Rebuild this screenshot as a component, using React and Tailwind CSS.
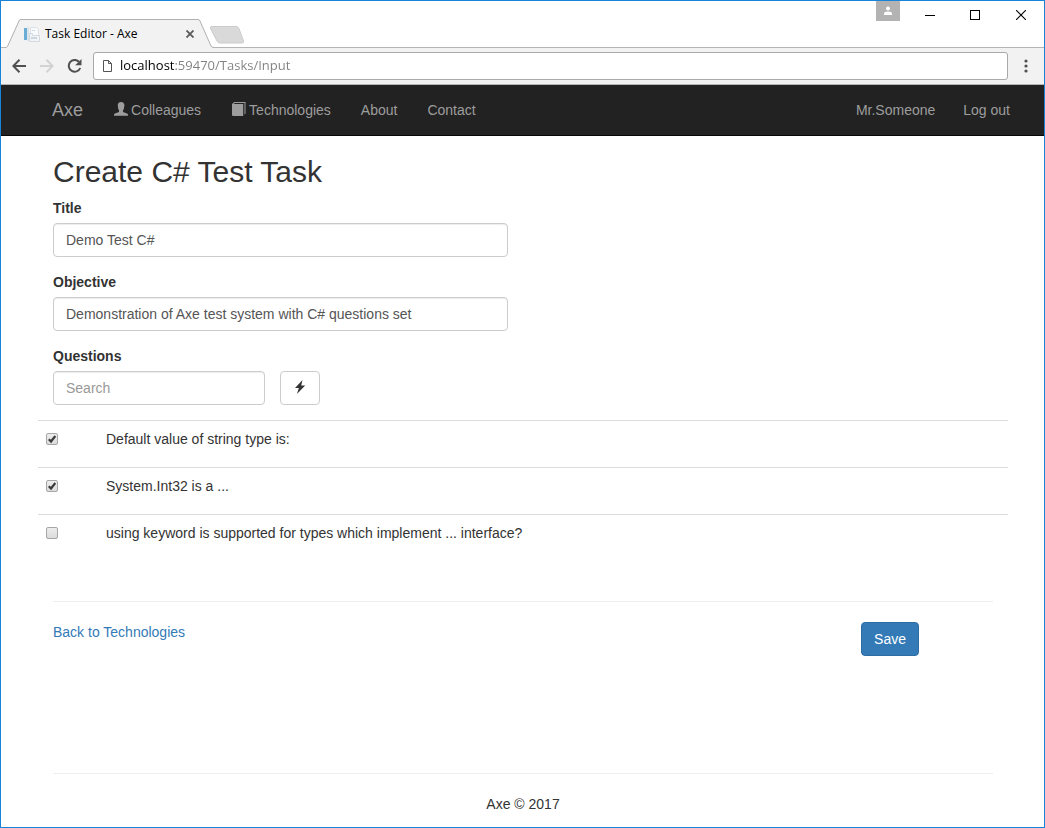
import React, { useState } from "react";

const QUESTIONS = [
  { id: "q1", text: "Default value of string type is:", checked: true },
  { id: "q2", text: "System.Int32 is a ...", checked: true },
  {
    id: "q3",
    text: "using keyword is supported for types which implement ... interface?",
    checked: false,
  },
];

const FIELD =
  "h-[34px] w-full rounded border border-[#ccc] bg-white px-3 text-sm text-[#555] shadow-[inset_0_1px_1px_rgba(0,0,0,0.075)] outline-none placeholder:text-[#999] focus:border-[#66afe9]";

function Favicon() {
  return (
    <svg width="16" height="16" viewBox="0 0 16 16" aria-hidden="true">
      <rect x="0" y="2" width="3" height="12" fill="#6aaed6" />
      <rect x="3" y="1" width="2" height="14" fill="#dbe4ec" />
      <path d="M6.500 1.500h6l2 2v7h-8z" fill="#f8fafc" stroke="#dce1e6" />
      <rect x="8" y="4" width="3" height="1" fill="#cfd9e2" />
      <path d="M5.500 7.500h3v2h7v6h-10z" fill="#f1f3f6" stroke="#d3d9df" />
      <rect x="7" y="11" width="6" height="2" fill="#cbd6e0" />
    </svg>
  );
}

function TabStrip() {
  return (
    <header className="flex h-[47px] justify-between border-b border-[#b5b5b5] bg-white">
      <div className="flex items-end">
        <div className="relative -mb-px ml-1 flex h-[29px] w-[209px] items-center">
          <svg className="absolute inset-0" width="209" height="29" viewBox="0 0 209 29" aria-hidden="true">
            <path d="M0 29V28.500Q1.800 28.500 2.500 27.500L14 2Q14.500 .5 16 .5H193Q194.500 .5 195 2L206 27Q207 28.500 209 28.500V29Z" fill="#f2f2f2" />
            <path d="M0 28.500Q1.800 28.500 2.500 27.500L14 2Q14.500 .5 16 .5H193Q194.500 .5 195 2L206 27Q207 28.500 209 28.500" fill="none" stroke="#b0b0b0" />
          </svg>
          <div className="relative flex w-full items-center gap-[5px] pr-4 pl-[19px]">
            <Favicon />
            <span className="flex-1 text-xs text-black">Task Editor - Axe</span>
            <button type="button" aria-label="Close tab" className="p-1">
              <svg width="8" height="8" viewBox="0 0 8 8" aria-hidden="true">
                <path d="M.5.5l7 7m0-7l-7 7" stroke="#5a5a5a" strokeWidth="1.800" />
              </svg>
            </button>
          </div>
        </div>
        <button type="button" aria-label="New tab" className="mb-[3px] -ml-[5px]">
          <svg width="35" height="18" viewBox="0 0 35 18" aria-hidden="true">
            <path d="M3 .5h24q2 0 3 2l4.500 12.500q.6 2-1.500 2H11q-2 0-3-2L1.500 2.500Q1 .5 3 .5z" fill="#d9d9d9" stroke="#cbcbcb" />
          </svg>
        </button>
      </div>
      <div className="flex items-start">
        <button type="button" aria-label="Profile" className="mr-6 flex h-5 w-6 items-center justify-center bg-[#b3b3b3]">
          <svg width="10" height="10" viewBox="0 0 10 10" fill="white" aria-hidden="true">
            <circle cx="5" cy="2.500" r="2" />
            <path d="M1 9V7.500Q1 5.500 5 5.500T9 7.500V9z" />
          </svg>
        </button>
        <button type="button" aria-label="Minimize" className="mt-2 mr-[34px]">
          <svg className="my-px block" width="12" height="10" viewBox="0 0 12 10" aria-hidden="true">
            <path d="M1 5.500h10" stroke="#000" />
          </svg>
        </button>
        <button type="button" aria-label="Maximize" className="mt-2 mr-9">
          <svg className="my-px block" width="10" height="10" viewBox="0 0 10 10" aria-hidden="true">
            <rect x=".5" y=".5" width="9" height="9" fill="none" stroke="#000" />
          </svg>
        </button>
        <button type="button" aria-label="Close window" className="mt-2 mr-[18px]">
          <svg className="my-px block" width="10" height="10" viewBox="0 0 10 10" aria-hidden="true">
            <path d="M0 0l10 10M10 0L0 10" stroke="#000" strokeWidth="1.100" />
          </svg>
        </button>
      </div>
    </header>
  );
}

function Toolbar() {
  return (
    <div className="flex h-[37px] items-center border-b border-[#b5b5b5] bg-[#f2f2f2] pr-4 pl-[11px]">
      <button type="button" aria-label="Back">
        <svg width="14" height="14" viewBox="0 0 14 14" fill="none" stroke="#505050" strokeWidth="2" aria-hidden="true">
          <path d="M14 7H1.500M7.500 .8L1.300 7l6.200 6.200" />
        </svg>
      </button>
      <button type="button" aria-label="Forward" className="ml-[14px]" disabled>
        <svg width="14" height="14" viewBox="0 0 14 14" fill="none" stroke="#d2d2d2" strokeWidth="2" aria-hidden="true">
          <path d="M0 7h12.500M6.500 .8L12.700 7l-6.200 6.200" />
        </svg>
      </button>
      <button type="button" aria-label="Reload" className="ml-[13px]">
        <svg width="15" height="14" viewBox="0 0 15 14" aria-hidden="true">
          <path d="M12 2.800A5.900 5.900 0 1 0 13.200 9" fill="none" stroke="#505050" strokeWidth="2" />
          <path d="M14.500 0v6.300H8.200z" fill="#505050" />
        </svg>
      </button>
      <label className="ml-[11px] flex h-7 flex-1 items-center gap-2 rounded-[3px] border border-[#a9a9a9] bg-white pl-[9px]">
        <svg width="9" height="12" viewBox="0 0 9 12" fill="none" stroke="#555" aria-hidden="true">
          <path d="M.5.5h5l3 3v8h-8z M5.500.5v3h3" />
        </svg>
        {/* The host part of the address is black, the rest grey. */}
        <input
          type="text"
          aria-label="Address"
          defaultValue="localhost:59470/Tasks/Input"
          className="min-w-0 flex-1 bg-[linear-gradient(to_right,#000_55px,#808080_55px)] bg-clip-text text-[13px] text-transparent caret-black outline-none"
        />
      </label>
      <button type="button" aria-label="Menu" className="ml-4">
        <svg width="4" height="14" viewBox="0 0 4 14" fill="#505050" aria-hidden="true">
          <circle cx="2" cy="2" r="1.600" />
          <circle cx="2" cy="7" r="1.600" />
          <circle cx="2" cy="12" r="1.600" />
        </svg>
      </button>
    </div>
  );
}

function UserIcon() {
  return (
    <svg width="15" height="14" viewBox="-1 0 15 14" fill="currentColor" aria-hidden="true">
      <path d="M7 0C4.700 0 3.800 1.400 3.800 3.200c0 1.900.4 3.500 1.400 4.600v1.400c0 .5-.3.800-.8 1L1 11.500C.2 11.900 0 12.300 0 13v.7h14V13c0-.7-.2-1.100-1-1.500l-3.400-1.300c-.5-.2-.8-.5-.8-1V7.800c1-1.100 1.600-2.700 1.600-4.600C10.400 1.400 9.300 0 7 0z" />
      <path d="M4.200 2h5.800v4l-1 2.500v1.500h-4v-1.500l-.8-2.500z" />
    </svg>
  );
}

function BookIcon() {
  return (
    <svg width="15" height="14" viewBox="-1 0 15 14" fill="currentColor" aria-hidden="true">
      <path d="M2.300 0H13.500V11.500L12.500 12.700V1H2.800L1.800 2H11.200V14H1.200Q0 14 0 13V2Z" />
    </svg>
  );
}

function Navbar() {
  return (
    <nav className="flex h-[51px] items-center justify-between border-b border-[#080808] bg-[#222] pr-[34px] pl-[51px] text-sm text-[#9d9d9d]">
      <div className="flex items-center">
        <a href="#home" className="mr-[30px] text-lg">Axe</a>
        <div className="flex items-center gap-[30px]">
          <a href="#colleagues" className="flex items-center gap-[3px]">
            <span className="pb-[2px]"><UserIcon /></span>
            Colleagues
          </a>
          <a href="#technologies" className="flex items-center gap-[3px]">
            <span className="pb-[2px]"><BookIcon /></span>
            Technologies
          </a>
          <a href="#about">About</a>
          <a href="#contact">Contact</a>
        </div>
      </div>
      <div className="flex items-center gap-7">
        <a href="#profile">Mr.Someone</a>
        <a href="#logout">Log out</a>
      </div>
    </nav>
  );
}

function QuestionRow({ question, onToggle }) {
  return (
    <tr className="h-[47px] border-t border-[#ddd] align-top">
      <td className="w-[60px] pt-3 pl-2">
        <span className="relative block h-3 w-3">
          <input
            type="checkbox"
            id={question.id}
            checked={question.checked}
            onChange={onToggle}
            className="block h-3 w-3 appearance-none rounded-xs border border-[#a6a6a6] bg-linear-to-b from-[#ededed] to-[#dcdcdc]"
          />
          {question.checked && (
            <svg className="pointer-events-none absolute inset-0" width="12" height="12" viewBox="0 0 12 12" aria-hidden="true">
              <path d="M2.800 6.200L5 8.500L9.300 3" fill="none" stroke="#3a3a3a" strokeWidth="2.200" />
            </svg>
          )}
        </span>
      </td>
      <td className="pt-2 pl-2">
        <label htmlFor={question.id} className="leading-5">{question.text}</label>
      </td>
    </tr>
  );
}

export default function App() {
  const [title, setTitle] = useState("Demo Test C#");
  const [objective, setObjective] = useState("Demonstration of Axe test system with C# questions set");
  const [search, setSearch] = useState("");
  const [questions, setQuestions] = useState(QUESTIONS);

  const toggle = (id) =>
    setQuestions((list) => list.map((q) => (q.id === id ? { ...q, checked: !q.checked } : q)));

  return (
    <div className="min-h-screen border border-[#1883d7] bg-white">
      <div className="font-['Open_Sans','Noto_Sans',sans-serif]">
        <TabStrip />
        <Toolbar />
      </div>
      <div className="font-['Liberation_Sans',Arial,sans-serif] text-sm leading-5 text-[#333]">
        <Navbar />
        <main className="pr-[51px] pl-[52px]">
          <h1 className="pt-[19px] pb-[9px] text-[30px] leading-[34px]">Create C# Test Task</h1>
          <form onSubmit={(e) => e.preventDefault()}>
            <div className="flex w-[455px] max-w-full flex-col gap-[15px]">
              <div>
                <label htmlFor="title" className="mb-[5px] block font-bold">Title</label>
                <input id="title" className={FIELD} value={title} onChange={(e) => setTitle(e.target.value)} />
              </div>
              <div>
                <label htmlFor="objective" className="mb-[5px] block font-bold">Objective</label>
                <input id="objective" className={FIELD} value={objective} onChange={(e) => setObjective(e.target.value)} />
              </div>
              <div>
                <label htmlFor="search" className="mb-[5px] block font-bold">Questions</label>
                <div className="flex gap-[15px]">
                  <div className="w-[212px]">
                    <input id="search" className={FIELD} placeholder="Search" value={search} onChange={(e) => setSearch(e.target.value)} />
                  </div>
                  <button type="button" aria-label="Generate" className="flex h-[34px] w-10 items-center justify-center rounded border border-[#ccc] bg-white pb-[2px]">
                    <svg width="12" height="14" viewBox="0 0 12 14" fill="#333" aria-hidden="true">
                      <path d="M8.500 0L1 8h3.900L2.900 14L11.200 5.500H7.200z" />
                    </svg>
                  </button>
                </div>
              </div>
            </div>
            <table className="-mx-[15px] mt-[15px] w-[calc(100%+30px)]">
              <tbody>
                {questions.map((q) => (
                  <QuestionRow key={q.id} question={q} onToggle={() => toggle(q.id)} />
                ))}
              </tbody>
            </table>
            <hr className="mt-[39px] border-[#eee]" />
            <div className="flex items-start justify-between pt-5 pr-[74px]">
              <a href="#technologies" className="text-[#337ab7]">Back to Technologies</a>
              <button type="submit" className="h-[34px] rounded border border-[#2e6da4] bg-[#337ab7] px-3 text-white">
                Save
              </button>
            </div>
          </form>
        </main>
        <footer className="mt-[117px] pr-[51px] pl-[52px]">
          <hr className="border-[#eee]" />
          <p className="pt-5 text-center">Axe © 2017</p>
        </footer>
      </div>
    </div>
  );
}
